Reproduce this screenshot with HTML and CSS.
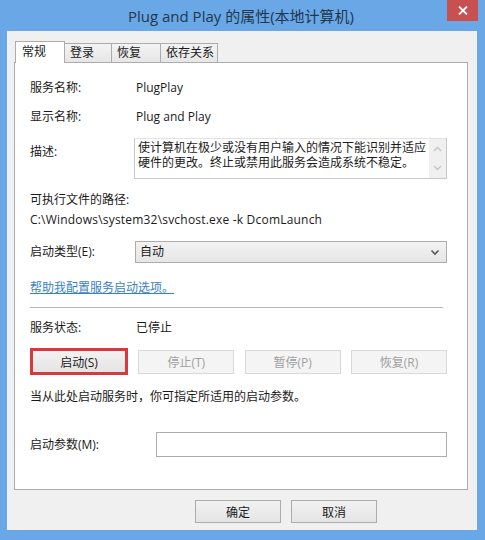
FILE: index.html
```html
<!DOCTYPE html>
<html lang="zh-CN">
<head>
<meta charset="utf-8">
<title>Plug and Play 的属性(本地计算机)</title>
<link rel="stylesheet" href="styles.css">
</head>
<body>
<div class="window">
  <div class="titlebar">
    <span class="title">Plug and Play 的属性(本地计算机)</span>
    <div class="close"><svg width="10" height="9" viewBox="0 0 10 9"><path d="M1 0.5 L9 8.5 M9 0.5 L1 8.5" stroke="#fff" stroke-width="1.8" fill="none"/></svg></div>
  </div>
  <div class="client">
    <div class="tabs">
      <div class="tab active w1">常规</div>
      <div class="tab w2">登录</div>
      <div class="tab w3">恢复</div>
      <div class="tab w4">依存关系</div>
    </div>
    <div class="panel">
      <div class="row r-name"><span class="label">服务名称:</span><span>PlugPlay</span></div>
      <div class="row r-disp"><span class="label">显示名称:</span><span>Plug and Play</span></div>
      <div class="row r-desc">
        <span class="label desc-label">描述:</span>
        <div class="desc-box">
          <div class="desc-text">使计算机在极少或没有用户输入的情况下能识别并适应硬件的更改。终止或禁用此服务会造成系统不稳定。</div>
          <div class="scroll">
            <svg width="9" height="6" viewBox="0 0 9 6"><path d="M1 5 L4.5 1.5 L8 5" stroke="#c4c4c4" stroke-width="1.4" fill="none"/></svg>
            <svg width="9" height="6" viewBox="0 0 9 6"><path d="M1 1 L4.5 4.5 L8 1" stroke="#c4c4c4" stroke-width="1.4" fill="none"/></svg>
          </div>
        </div>
      </div>
      <div class="plain r-exe">可执行文件的路径:</div>
      <div class="plain r-path">C:\Windows\system32\svchost.exe -k DcomLaunch</div>
      <div class="row r-type">
        <span class="label">启动类型(E):</span>
        <div class="select"><span>自动</span>
          <svg width="10" height="7" viewBox="0 0 10 7"><path d="M1.5 1.5 L5 5 L8.5 1.5" stroke="#555" stroke-width="1.6" fill="none"/></svg>
        </div>
      </div>
      <div class="plain r-link"><a class="link" href="#">帮助我配置服务启动选项。</a></div>
      <div class="sep"></div>
      <div class="row r-status"><span class="label">服务状态:</span><span>已停止</span></div>
      <div class="btnrow">
        <div class="btn svc highlight">启动(S)</div>
        <div class="btn svc disabled">停止(T)</div>
        <div class="btn svc disabled">暂停(P)</div>
        <div class="btn svc disabled">恢复(R)</div>
      </div>
      <div class="plain r-hint">当从此处启动服务时，你可指定所适用的启动参数。</div>
      <div class="row r-param">
        <span class="label param-label">启动参数(M):</span>
        <div class="input"></div>
      </div>
    </div>
    <div class="footer">
      <div class="btn dlg">确定</div>
      <div class="btn dlg">取消</div>
    </div>
  </div>
</div>
</body>
</html>
```
FILE: styles.css
```css
html, body {
  margin: 0;
  padding: 0;
}
body {
  width: 485px;
  height: 540px;
  overflow: hidden;
  font-family: "Open Sans", "Noto Sans CJK SC", sans-serif;
  font-size: 12px;
  color: #1a1a1a;
}
.window {
  width: 485px;
  height: 540px;
  background: #69a7e6;
  display: flex;
  flex-direction: column;
  box-sizing: border-box;
}
.titlebar {
  height: 31px;
  position: relative;
  display: flex;
  justify-content: center;
  align-items: center;
  flex: none;
}
.title {
  font-size: 15px;
  color: #22374e;
  line-height: 20px;
  margin-top: 1px;
  margin-right: 3px;
}
.close {
  position: absolute;
  right: 7px;
  top: 0;
  width: 31px;
  height: 21px;
  background: #c75050;
  display: flex;
  align-items: center;
  justify-content: center;
}
.client {
  margin: 0 8px 10px 7px;
  flex: 1;
  background: #f0f0f0;
  padding: 10px 9px 0 7px;
  box-sizing: border-box;
}
.tabs {
  display: flex;
  align-items: flex-end;
  height: 21px;
  padding-left: 1px;
}
.tab {
  box-sizing: border-box;
  height: 19px;
  border: 1px solid #acacac;
  border-bottom: none;
  background: linear-gradient(#f3f3f3, #e6e6e6);
  padding-left: 5px;
  line-height: 17px;
  margin-left: -1px;
}
.tab.active {
  height: 22px;
  background: #fff;
  position: relative;
  z-index: 1;
  margin-bottom: -1px;
  margin-left: 0;
  padding-left: 6px;
  line-height: 20px;
}
.w1 { width: 50px; }
.w2 { width: 48px; }
.w3 { width: 50px; }
.w4 { width: 58px; }
.panel {
  height: 428px;
  box-sizing: border-box;
  border: 1px solid #acacac;
  background: #fff;
  padding: 0 20px 0 15px;
}
.row {
  display: flex;
  align-items: center;
  line-height: 16px;
}
.plain {
  line-height: 16px;
}
.label {
  width: 106px;
  flex: none;
}
.r-name { margin-top: 17px; }
.r-disp { margin-top: 13px; }
.r-desc {
  margin-top: 13px;
  align-items: flex-start;
}
.desc-label {
  width: 104px;
  margin-top: 6px;
}
.desc-box {
  flex: 1;
  height: 41px;
  box-sizing: border-box;
  border: 1px solid #c8c8c8;
  border-top-color: #e2e2e2;
  display: flex;
}
.desc-text {
  flex: 1;
  padding: 1px 0 0 3px;
  line-height: 15px;
}
.scroll {
  width: 17px;
  background: #f0f0f0;
  display: flex;
  flex-direction: column;
  align-items: center;
  justify-content: space-between;
  padding: 7px 0 7px;
}
.r-exe { margin-top: 13px; }
.r-path {
  margin-top: 4px;
  letter-spacing: 0.2px;
}
.r-type { margin-top: 13px; }
.r-type .label { width: 105px; }
.select {
  flex: 1;
  height: 22px;
  box-sizing: border-box;
  border: 1px solid #acacac;
  background: linear-gradient(#f2f2f2, #e6e6e6);
  display: flex;
  align-items: center;
  justify-content: space-between;
  padding: 0 6px 0 4px;
}
.r-link { margin-top: 17px; }
.link {
  color: #3a7fc6;
  text-decoration: underline;
}
.sep {
  margin-top: 11px;
  height: 1px;
  background: #b5b5b5;
  margin-right: 4px;
}
.r-status { margin-top: 12px; }
.btnrow {
  margin-top: 12px;
  display: flex;
  justify-content: space-between;
  align-items: center;
  height: 27px;
}
.btn {
  box-sizing: border-box;
  border: 1px solid #acacac;
  background: linear-gradient(#f2f2f2, #e4e4e4);
  display: flex;
  align-items: center;
  justify-content: center;
}
.svc {
  width: 96px;
  height: 24px;
}
.highlight {
  width: 98px;
  height: 27px;
  border: 3px solid #d8393c;
}
.disabled {
  background: #f4f4f4;
  border-color: #d9d9d9;
  color: #a0a0a0;
}
.r-hint { margin-top: 14px; }
.r-param { margin-top: 27px; }
.param-label { width: 126px; }
.input {
  flex: 1;
  height: 25px;
  box-sizing: border-box;
  border: 1px solid #acacac;
  background: #fff;
}
.footer {
  display: flex;
  gap: 10px;
  margin-top: 10px;
  padding-left: 181px;
}
.dlg {
  width: 86px;
  height: 23px;
}
```
